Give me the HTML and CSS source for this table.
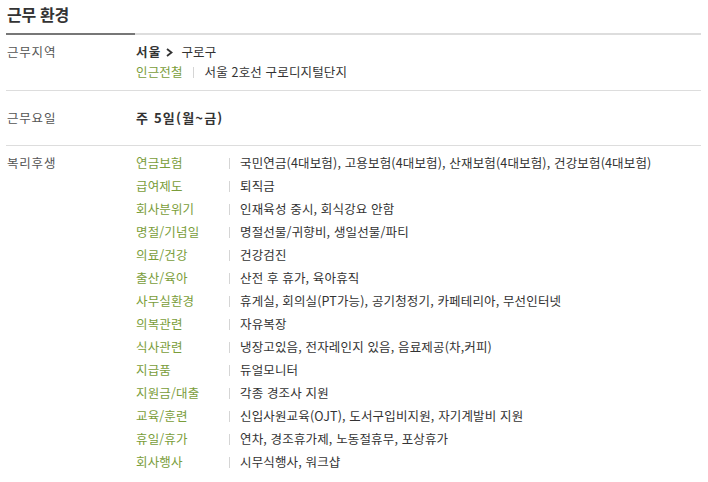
FILE: index.html
```html
<!DOCTYPE html>
<html lang="ko">
<head>
<meta charset="utf-8">
<link rel="stylesheet" href="styles.css">
</head>
<body>
<div class="wrap">
  <h2 class="title">근무 환경</h2>
  <div class="rule"><span class="rule-dark"></span><span class="rule-light"></span></div>

  <div class="row row-loc">
    <div class="label">근무지역</div>
    <div class="value">
      <div class="line"><b>서울</b><svg class="chev" width="7" height="9" viewBox="0 0 7 9"><path d="M1 1 L5.5 4.5 L1 8" fill="none" stroke="#333" stroke-width="1.8"/></svg>구로구</div>
      <div class="line"><span class="green">인근전철</span><span class="sep"></span>서울 2호선 구로디지털단지</div>
    </div>
  </div>

  <div class="row row-day">
    <div class="label">근무요일</div>
    <div class="value"><b class="days">주 5일(월~금)</b></div>
  </div>

  <div class="row row-ben">
    <div class="label">복리후생</div>
    <div class="value">
      <div class="ben"><span class="cat">연금보험</span><span class="sep"></span>국민연금(4대보험), 고용보험(4대보험), 산재보험(4대보험), 건강보험(4대보험)</div>
      <div class="ben"><span class="cat">급여제도</span><span class="sep"></span>퇴직금</div>
      <div class="ben"><span class="cat">회사분위기</span><span class="sep"></span>인재육성 중시, 회식강요 안함</div>
      <div class="ben"><span class="cat">명절/기념일</span><span class="sep"></span>명절선물/귀향비, 생일선물/파티</div>
      <div class="ben"><span class="cat">의료/건강</span><span class="sep"></span>건강검진</div>
      <div class="ben"><span class="cat">출산/육아</span><span class="sep"></span>산전 후 휴가, 육아휴직</div>
      <div class="ben"><span class="cat">사무실환경</span><span class="sep"></span>휴게실, 회의실(PT가능), 공기청정기, 카페테리아, 무선인터넷</div>
      <div class="ben"><span class="cat">의복관련</span><span class="sep"></span>자유복장</div>
      <div class="ben"><span class="cat">식사관련</span><span class="sep"></span>냉장고있음, 전자레인지 있음, 음료제공(차,커피)</div>
      <div class="ben"><span class="cat">지급품</span><span class="sep"></span>듀얼모니터</div>
      <div class="ben"><span class="cat">지원금/대출</span><span class="sep"></span>각종 경조사 지원</div>
      <div class="ben"><span class="cat">교육/훈련</span><span class="sep"></span>신입사원교육(OJT), 도서구입비지원, 자기계발비 지원</div>
      <div class="ben"><span class="cat">휴일/휴가</span><span class="sep"></span>연차, 경조휴가제, 노동절휴무, 포상휴가</div>
      <div class="ben"><span class="cat">회사행사</span><span class="sep"></span>시무식행사, 워크샵</div>
    </div>
  </div>
</div>
</body>
</html>
```

FILE: styles.css
```css
html, body {
  margin: 0;
  padding: 0;
  background: #fff;
}
body {
  font-family: "Noto Sans CJK KR", "Noto Sans", sans-serif;
  font-size: 12.5px;
  letter-spacing: 0.15px;
  color: #333;
}
.wrap {
  width: 695px;
  margin-left: 6px;
}
.title {
  margin: 0;
  height: 33px;
  line-height: 28px;
  font-size: 16px;
  font-weight: 700;
  color: #333;
  padding-left: 1px;
  box-sizing: border-box;
  letter-spacing: -0.3px;
}
.rule {
  display: flex;
  height: 2px;
}
.rule-dark {
  width: 129px;
  background: #777;
}
.rule-light {
  flex: 1;
  background: #ddd;
}
.row {
  display: flex;
  border-bottom: 1px solid #ddd;
}
.row-ben {
  border-bottom: none;
}
.label {
  width: 130px;
  padding-left: 1px;
  box-sizing: border-box;
  color: #555;
  line-height: 20px;
  letter-spacing: 0.8px;
}
.value {
  flex: 1;
  line-height: 20px;
}
.row-loc {
  padding: 7px 0 8px;
}
.row-day {
  padding: 17px 0 17px;
}
.row-ben {
  padding-top: 7px;
}
.line {
  height: 20px;
  display: flex;
  align-items: center;
}
b {
  font-weight: 700;
  letter-spacing: 1.2px;
}
.days {
  font-size: 13px;
}
.chev {
  margin: 0 8px 0 5px;
}
.green, .cat {
  color: #7a9d3a;
}
.sep {
  display: inline-block;
  width: 1px;
  height: 11px;
  background: #d5d5d5;
  margin: 0 11px 0 10px;
}
.ben {
  display: flex;
  align-items: center;
  height: 23px;
  margin-top: -1.5px;
  margin-bottom: 1.5px;
}
.cat {
  width: 93px;
}
.ben .sep {
  margin: 0 10px 0 0;
}
```
